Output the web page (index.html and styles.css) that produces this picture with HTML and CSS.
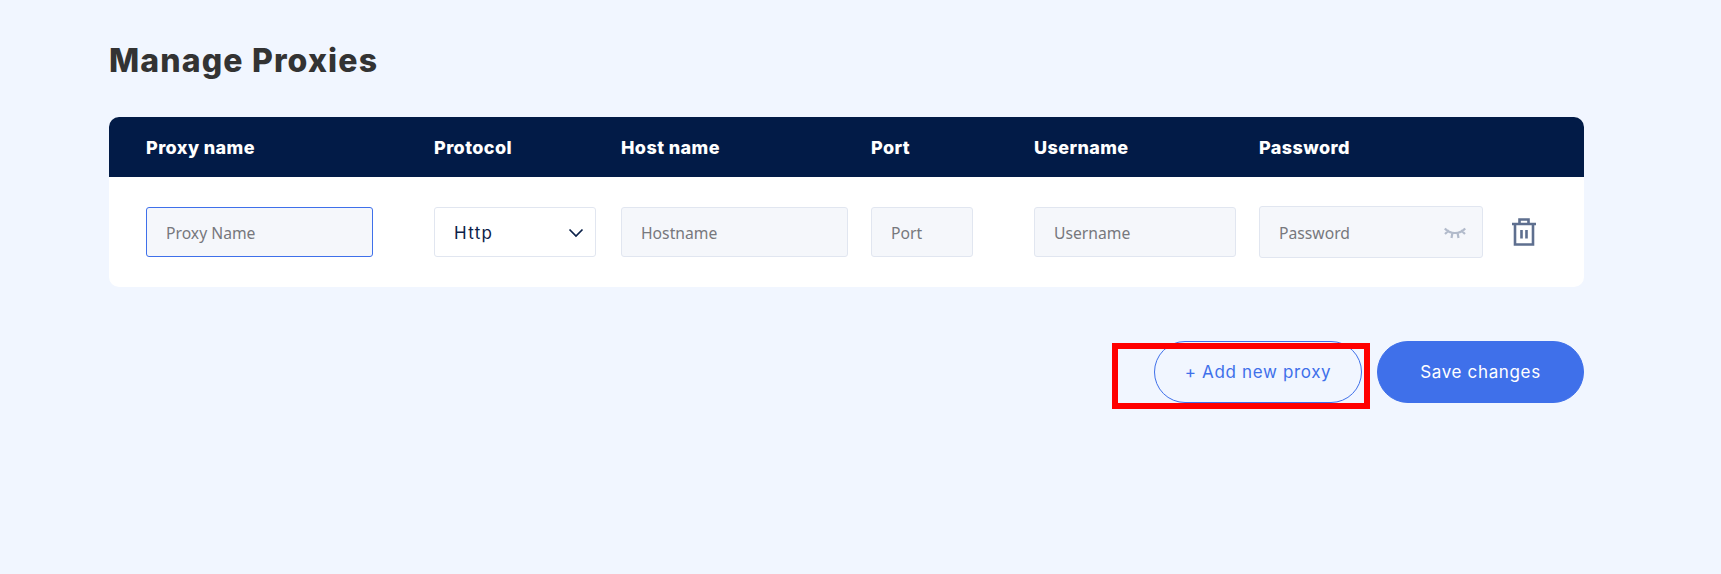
FILE: index.html
```html
<!DOCTYPE html>
<html lang="en">
<head>
<meta charset="utf-8">
<title>Manage Proxies</title>
<link rel="stylesheet" href="styles.css">
</head>
<body>
<main class="page">
  <h1 class="title">Manage Proxies</h1>
  <section class="table">
    <div class="grid head">
      <div>Proxy name</div>
      <div>Protocol</div>
      <div>Host name</div>
      <div>Port</div>
      <div>Username</div>
      <div>Password</div>
    </div>
    <div class="grid row">
      <div class="field w-name focus"><span>Proxy Name</span></div>
      <div class="select">
        <span>Http</span>
        <svg class="chev" width="16" height="10" viewBox="0 0 16 10"><path d="M1.5 1.5 8 8l6.5-6.500" fill="none" stroke="#0b2149" stroke-width="1.7"/></svg>
      </div>
      <div class="field w-name"><span>Hostname</span></div>
      <div class="field w-port"><span>Port</span></div>
      <div class="field w-user"><span>Username</span></div>
      <div class="pass-wrap">
        <div class="field w-pass">
          <span>Password</span>
          <svg class="eye" width="22" height="13" viewBox="0 0 22 13"><path d="M.8 1.500C3.500 4.500 7 6 11 6s7.500-1.500 10.200-4.500M1 7l4-3.800M21 7l-4-3.800M7.500 11l1-5.500M14.500 11l-1-5.500" fill="none" stroke="#b2bbcb" stroke-width="2.200"/></svg>
        </div>
        <svg class="trash" width="24" height="28" viewBox="0 0 24 28"><path d="M0 6h24M7.500 6V1.500h9V6M3 6v20.500h18V6M9.500 12v8.500M14.500 12v8.500" fill="none" stroke="#5e6f8f" stroke-width="2.600"/></svg>
      </div>
    </div>
  </section>
  <div class="actions">
    <button class="btn ghost">+ Add new proxy</button>
    <button class="btn primary">Save changes</button>
  </div>
</main>
<div class="marker"></div>
</body>
</html>
```
FILE: styles.css
```css
* { box-sizing: border-box; }
html, body { margin: 0; height: 100%; }
body {
  background: #f1f6ff;
  font-family: "Inter", "Liberation Sans", sans-serif;
  overflow: hidden;
  position: relative;
}
.page { padding: 42px 137px 0 109px; }
.title {
  margin: 0 0 38px;
  font-size: 32px;
  line-height: 37px;
  font-weight: 800;
  letter-spacing: 1.15px;
  color: #333333;
}
.table { background: #fff; border-radius: 10px; overflow: hidden; }
.grid {
  display: grid;
  grid-template-columns: 288px 187px 250px 163px 225px 1fr;
  padding-left: 37px;
}
.head {
  height: 60px;
  padding-top: 1px;
  align-items: center;
  background: #021b47;
  color: #fff;
  font-size: 18px;
  font-weight: 800;
  letter-spacing: 0.4px;
}
.row { height: 110px; align-items: center; }
.field {
  height: 50px;
  display: flex;
  align-items: center;
  padding: 2px 19px 0;
  background: #f5f7fb;
  border: 1px solid #e1e6f0;
  border-radius: 3px;
  color: #77787d;
  font-family: "Noto Sans", "Open Sans", sans-serif;
  font-size: 15.7px;
}
.focus { border-color: #3f70ea; }
.w-name { width: 227px; }
.w-port { width: 102px; }
.w-user { width: 202px; }
.w-pass { width: 224px; height: 52px; justify-content: space-between; padding-right: 16px; }
.select {
  width: 162px;
  height: 50px;
  display: flex;
  align-items: center;
  justify-content: space-between;
  padding: 1px 11px 0 19px;
  background: #fff;
  border: 1px solid #e1e6f0;
  border-radius: 3px;
  color: #0b2149;
  font-size: 17px;
  letter-spacing: 1.3px;
}
.pass-wrap { display: flex; align-items: center; gap: 29px; }
.actions { display: flex; justify-content: flex-end; gap: 15px; margin-top: 54px; }
.btn {
  height: 62px;
  border-radius: 31px;
  font-family: "Inter", "Liberation Sans", sans-serif;
  font-size: 17px;
  font-weight: 400;
  letter-spacing: 0.65px;
}
.ghost { width: 208px; background: transparent; border: 1px solid #3f70ea; color: #3f70ea; }
.primary { width: 207px; background: #3f70ea; border: 1px solid #3f70ea; color: #fff; }
.marker {
  position: absolute;
  left: 1112px;
  top: 343px;
  width: 258px;
  height: 66px;
  border: 6px solid #ff0000;
  pointer-events: none;
}
```
